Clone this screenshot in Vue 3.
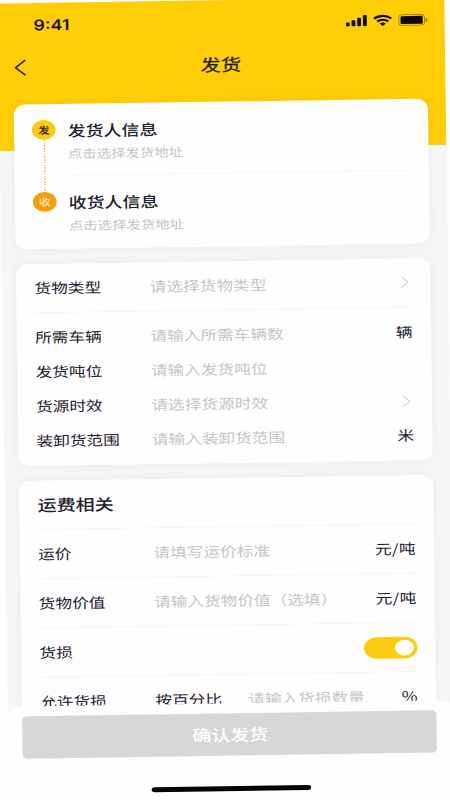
<script setup>
const parties = [
  { mark: '发', title: '发货人信息', hint: '点击选择发货地址', kind: 'from' },
  { mark: '收', title: '收货人信息', hint: '点击选择发货地址', kind: 'to' },
]
const cargo = [
  { label: '所需车辆', hint: '请输入所需车辆数', unit: '辆' },
  { label: '发货吨位', hint: '请输入发货吨位' },
  { label: '货源时效', hint: '请选择货源时效', arrow: true },
  { label: '装卸货范围', hint: '请输入装卸货范围', unit: '米' },
]
const fees = [
  { label: '运价', hint: '请填写运价标准', unit: '元/吨' },
  { label: '货物价值', hint: '请输入货物价值（选填）', unit: '元/吨' },
]
</script>

<template>
  <div class="viewport">
    <div class="screen">
      <div class="status">
        <span class="time">9:41</span>
        <div class="indicators">
          <svg class="signal" viewBox="0 0 18 12">
            <rect x="0" y="7.6" width="3.2" height="4" rx="0.9" />
            <rect x="4.8" y="5.4" width="3.2" height="6.2" rx="0.9" />
            <rect x="9.6" y="3" width="3.2" height="8.6" rx="0.9" />
            <rect x="14.4" y="0.3" width="3.2" height="11.3" rx="0.9" />
          </svg>
          <svg class="wifi" viewBox="0 0 16 12">
            <path d="M.8 4.3C4.9 .5 11.1 .5 15.2 4.3M3.4 7.1c2.6-2.4 6.6-2.4 9.2 0" />
            <path class="dot" d="M5.4 9.2C6.9 7.9 9.1 7.9 10.6 9.2L8 11.8z" />
          </svg>
          <svg class="battery" viewBox="0 0 25 12">
            <rect class="shell" x="0.5" y="0.5" width="21.6" height="11" rx="2.8" />
            <rect x="2" y="2" width="18.6" height="8" rx="1" />
            <path class="cap" d="M23.2 4v4c.8-.3 1.3-1.1 1.3-2s-.5-1.7-1.3-2z" />
          </svg>
        </div>
      </div>

      <div class="nav">
        <svg class="back" viewBox="0 0 10 17"><path d="M9.3 .8 1 8.5l8.3 7.7" /></svg>
        <span class="nav-title">发货</span>
      </div>

      <div class="cards">
        <section class="card parties">
          <div class="rail">
            <span class="mark from">发</span>
            <i class="dots"></i>
            <span class="mark to">收</span>
          </div>
          <div class="party-list">
            <div v-for="p in parties" :key="p.kind" class="party">
              <div class="party-title">{{ p.title }}</div>
              <div class="party-hint">{{ p.hint }}</div>
            </div>
          </div>
        </section>

        <section class="card cargo">
          <div class="row lined">
            <span class="label">货物类型</span>
            <span class="hint">请选择货物类型</span>
            <svg class="arrow" viewBox="0 0 7 12"><path d="M.5 .5 6.3 6 .5 11.5" /></svg>
          </div>
          <div class="tight">
            <div v-for="r in cargo" :key="r.label" class="row short">
              <span class="label">{{ r.label }}</span>
              <span class="hint">{{ r.hint }}</span>
              <span v-if="r.unit" class="unit">{{ r.unit }}</span>
              <svg v-if="r.arrow" class="arrow" viewBox="0 0 7 12"><path d="M.5 .5 6.3 6 .5 11.5" /></svg>
            </div>
          </div>
        </section>

        <section class="card fees">
          <div class="row lined"><span class="section-title">运费相关</span></div>
          <div v-for="r in fees" :key="r.label" class="row lined">
            <span class="label">{{ r.label }}</span>
            <span class="hint">{{ r.hint }}</span>
            <span class="unit">{{ r.unit }}</span>
          </div>
          <div class="row lined">
            <span class="label grow">货损</span>
            <span class="toggle"><i class="knob"></i></span>
          </div>
          <div class="row">
            <span class="label">允许货损</span>
            <span class="mode">按百分比</span>
            <span class="hint">请输入货损数量</span>
            <span class="unit percent">%</span>
          </div>
        </section>
      </div>

      <div class="footer">
        <button class="submit">确认发货</button>
        <i class="home"></i>
      </div>
    </div>
  </div>
</template>

<style>
body {
  background: #fefefe;
}
</style>

<style scoped>
.viewport {
  width: 450px;
  height: 800px;
  overflow: hidden;
  background: #fefefe;
}
.screen {
  width: 375px;
  height: 812px;
  overflow: hidden;
  display: flex;
  flex-direction: column;
  box-sizing: border-box;
  background: linear-gradient(#ffce07 150px, #f5f6f6 150px);
  font-family: "Noto Sans CJK SC", sans-serif;
  color: #1f2030;
  transform-origin: 0 0;
  transform: matrix(1.19, -0.0179, 0.0136, 0.985, -2, 3.5);
}
.status {
  flex: none;
  height: 46px;
  box-sizing: border-box;
  padding: 0 13.8px 0 29.5px;
  display: flex;
  align-items: center;
  justify-content: space-between;
}
.time {
  font: 600 15px/20px Inter, sans-serif;
  color: #15130a;
}
.indicators {
  display: flex;
  align-items: center;
  gap: 5px;
}
.indicators svg {
  display: block;
  height: 12px;
  fill: #0c0b02;
}
.signal { width: 18px; }
.wifi { width: 16px; }
.battery { width: 25px; }
.wifi path {
  fill: none;
  stroke: #0c0b02;
  stroke-width: 2.1;
}
.wifi .dot {
  fill: #0c0b02;
  stroke: none;
}
.battery .shell {
  fill: none;
  stroke: #0c0b02;
  stroke-opacity: 0.45;
  stroke-width: 0.8;
}
.battery .cap { fill-opacity: 0.5; }
.nav {
  flex: none;
  height: 38px;
  margin-bottom: 19px;
  padding: 0 14px 0 13px;
  display: grid;
  grid-template-columns: 10px 1fr 10px;
  align-items: center;
}
.back {
  width: 10px;
  height: 17px;
  margin-top: 1px;
  fill: none;
  stroke: #1b1804;
  stroke-width: 1.4;
}
.nav-title {
  padding: 0 1px 1px 0;
  text-align: center;
  font-size: 17px;
  line-height: 24px;
  font-weight: 400;
  -webkit-text-stroke: 0.25px #1d1a0a;
  color: #1d1a0a;
}
.cards {
  flex: 1;
  min-height: 0;
  padding: 0 15.5px 0 12px;
  display: flex;
  flex-direction: column;
  gap: 15px;
}
.card {
  flex: none;
  box-sizing: border-box;
  background: #fefefe;
  border-radius: 10px;
  box-shadow: 0 0 8px rgba(60, 80, 80, 0.05);
}
.parties {
  height: 147px;
  padding: 0 17px 0 15px;
  display: flex;
  gap: 10px;
}
.rail {
  padding-top: 16px;
  display: flex;
  flex-direction: column;
  align-items: center;
}
.mark {
  width: 20px;
  height: 20px;
  border-radius: 50%;
  font-size: 10px;
  line-height: 19.5px;
  text-align: center;
}
.mark.from {
  background: #fccb0c;
  color: #2b2410;
  font-weight: 500;
}
.mark.to {
  background: #f99c0c;
  color: #fff4dc;
}
.dots {
  width: 1px;
  height: 53px;
  background: repeating-linear-gradient(#f3b52c 0 1.6px, transparent 1.6px 2.8px);
}
.party-list { flex: 1; }
.party {
  height: 73px;
  box-sizing: border-box;
  padding-top: 14.5px;
  border-bottom: 1px solid #f5f6f7;
}
.party:last-child { border-bottom: none; }
.party-title {
  font-size: 15.1px;
  line-height: 22px;
  font-weight: 500;
}
.party-hint {
  padding-top: 4.2px;
  font-size: 12.1px;
  line-height: 18px;
  color: #c3c6cb;
}
.cargo { height: 205px; }
.cargo, .fees { padding: 0 15px; }
.row {
  height: 50px;
  box-sizing: border-box;
  padding-bottom: 1.5px;
  display: flex;
  align-items: center;
  font-size: 14px;
  line-height: 20px;
  white-space: nowrap;
}
.row.lined { border-bottom: 1px solid #f4f5f6; }
.tight { padding-top: 7.5px; }
.row.short { height: 35px; }
.label {
  width: 97.2px;
  padding-left: 0.3px;
  box-sizing: border-box;
}
.label.grow { flex: 1; }
.hint {
  flex: 1;
  color: #c3c6cb;
}
.mode { width: 78px; }
.percent { font-size: 14.5px; }
.arrow {
  width: 7px;
  height: 12px;
  margin: 1px 2.3px 0 0;
  fill: none;
  stroke: #cfd2d6;
  stroke-width: 1;
}
.section-title {
  padding-left: 0.5px;
  font-size: 16px;
  font-weight: 500;
}
.unit {
  margin-right: -0.3px;
  letter-spacing: 0.3px;
  color: #17182a;
}
.toggle {
  width: 44.5px;
  height: 22px;
  margin: 1.5px -0.4px 0 0;
  box-sizing: border-box;
  padding: 3px;
  border-radius: 11px;
  background: #fdcb10;
  display: flex;
  justify-content: flex-end;
}
.knob {
  width: 16px;
  height: 16px;
  border-radius: 50%;
  background: #fefefe;
}
.footer {
  position: relative;
  flex: none;
  height: 98px;
  box-sizing: border-box;
  padding: 9.5px 15px 9px 12.3px;
  border-radius: 12px 12px 0 0;
  background: #fefefe;
  display: flex;
  flex-direction: column;
  align-items: center;
  justify-content: space-between;
}
.submit {
  width: 100%;
  height: 43px;
  padding: 0 0 0 1px;
  border: 0;
  border-radius: 4px;
  background: #d7d7d7;
  color: #fefefe;
  font: 500 16px/43px "Noto Sans CJK SC", sans-serif;
}
.home {
  width: 134px;
  height: 5px;
  margin-left: 1px;
  border-radius: 3px;
  background: #050505;
}
</style>
